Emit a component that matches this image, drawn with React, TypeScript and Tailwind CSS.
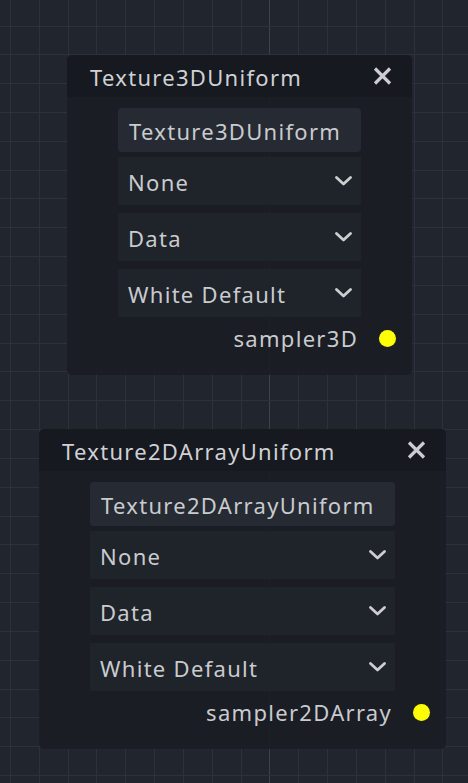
import React from "react";

const GRID = 28.83;

function GridCanvas() {
  const xs = Array.from({ length: 18 }, (_, i) => 10 + i * GRID);
  const ys = Array.from({ length: 29 }, (_, i) => 25.5 + i * GRID);
  return (
    <svg className="absolute inset-0" width="468" height="783" aria-hidden>
      <rect width="468" height="783" fill="#21252d" />
      {xs.map((x, i) => (
        <line
          key={"x" + i}
          x1={Math.round(x) + 0.5}
          x2={Math.round(x) + 0.5}
          y1={0}
          y2={783}
          stroke={i === 9 ? "#3c414a" : "#2d3139"}
          strokeWidth={1}
        />
      ))}
      {ys.map((y, i) => (
        <line
          key={"y" + i}
          y1={Math.round(y) + 0.5}
          y2={Math.round(y) + 0.5}
          x1={0}
          x2={468}
          stroke="#2d3139"
          strokeWidth={1}
        />
      ))}
    </svg>
  );
}

function CloseIcon() {
  return (
    <svg width="19" height="20" viewBox="0 0 19 20" className="shrink-0">
      <path d="M2 2.5 L17 17.5 M17 2.5 L2 17.5" stroke="#cbcdd0" strokeWidth="3.2" strokeLinecap="butt" />
    </svg>
  );
}

function Chevron() {
  return (
    <svg width="17" height="10" viewBox="0 0 17 10" className="shrink-0">
      <path d="M1.5 1.5 L8.5 8 L15.5 1.5" stroke="#cbcdd0" strokeWidth="2.8" fill="none" strokeLinecap="round" strokeLinejoin="round" />
    </svg>
  );
}

function Select({ value, first }: { value: string; first?: boolean }) {
  return (
    <div
      className={
        first
          ? "mt-[5px] flex h-[48px] items-center justify-between bg-[#1f232a] pl-[10px] pr-[9px]"
          : "mt-[8px] flex h-[48px] items-center justify-between bg-[#1f232a] pl-[10px] pr-[9px]"
      }
    >
      <span className="pt-[2px]">{value}</span>
      <Chevron />
    </div>
  );
}

type NodeProps = {
  left: string;
  top: string;
  width: string;
  title: string;
  port: string;
};

function ShaderNode({ left, top, width, title, port }: NodeProps) {
  return (
    <div className={`absolute ${left} ${top} ${width} overflow-hidden rounded-[5px]`}>
      <div className="flex h-[42px] items-center justify-between bg-[#16191f] pl-[23px] pr-[20px] text-[#cfd1d4]">
        <span className="pt-[2px]">{title}</span>
        <CloseIcon />
      </div>
      <div className="relative bg-[#1a1d24]/90 px-[51px] pt-[11px] pb-[17px]">
        <div className="flex h-[44px] items-center rounded-[4px] bg-[#252a33] px-[11px] pt-[2px]">{title}</div>
        <Select value="None" first />
        <Select value="Data" />
        <Select value="White Default" />
        <div className="mt-[1px] flex h-[40px] items-center justify-end pr-[3px]">
          <span>{port}</span>
        </div>
        <span className="absolute right-[16px] bottom-[28px] h-[17px] w-[17px] rounded-full bg-[#ffff00]" />
      </div>
    </div>
  );
}

export default function App() {
  return (
    <div className="relative h-[783px] w-[468px] overflow-hidden font-['Noto_Sans',sans-serif] text-[22px] tracking-[1.3px] text-[#c9cbce]">
      <GridCanvas />
      <ShaderNode left="left-[67px]" top="top-[55px]" width="w-[345px]" title="Texture3DUniform" port="sampler3D" />
      <ShaderNode left="left-[39px]" top="top-[429px]" width="w-[407px]" title="Texture2DArrayUniform" port="sampler2DArray" />
    </div>
  );
}
